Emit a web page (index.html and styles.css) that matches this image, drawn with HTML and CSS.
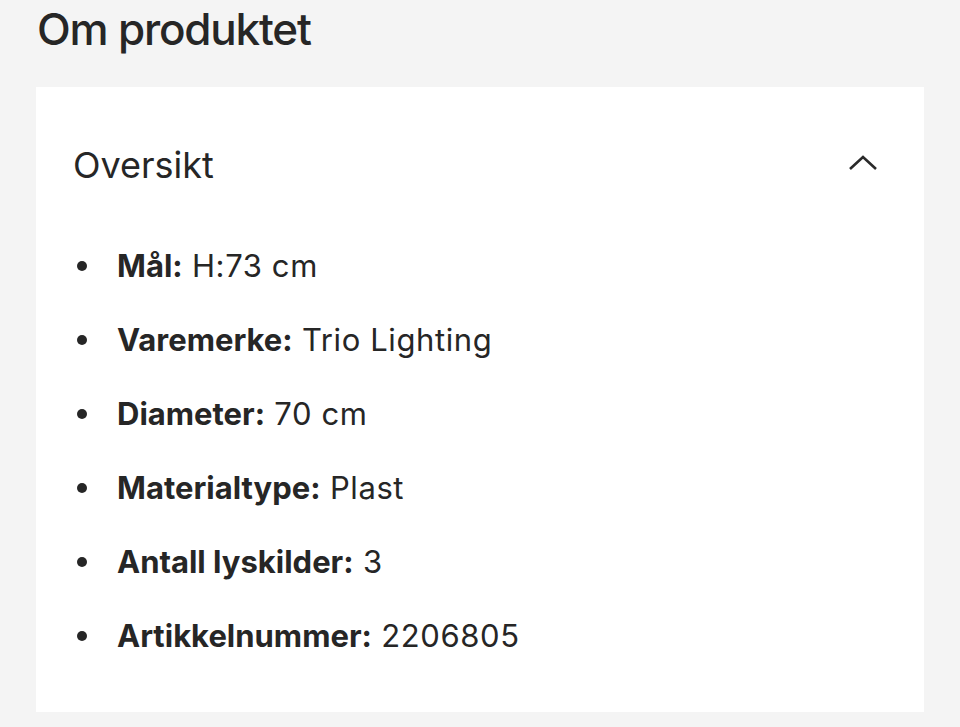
FILE: index.html
```html
<!DOCTYPE html>
<html lang="no">
<head>
<meta charset="utf-8">
<title>Om produktet</title>
<link rel="stylesheet" href="styles.css">
</head>
<body>
<h1 class="title">Om produktet</h1>
<section class="card">
  <div class="card-head">
    <h2 class="card-title">Oversikt</h2>
    <svg class="chevron" width="30" height="18" viewBox="0 0 30 18" aria-hidden="true">
      <path d="M2 15 L15 3 L28 15" fill="none" stroke="#2a2a2a" stroke-width="2.6" stroke-linecap="butt" stroke-linejoin="miter"/>
    </svg>
  </div>
  <ul class="specs">
    <li><b>Mål:</b> H:73 cm</li>
    <li><b>Varemerke:</b> Trio Lighting</li>
    <li><b>Diameter:</b> 70 cm</li>
    <li><b>Materialtype:</b> Plast</li>
    <li><b>Antall lyskilder:</b> 3</li>
    <li><b>Artikkelnummer:</b> 2206805</li>
  </ul>
</section>
</body>
</html>
```

FILE: styles.css
```css
html, body {
  margin: 0;
  padding: 0;
  background: #f4f4f4;
}
body {
  font-family: Inter, "Noto Sans", sans-serif;
  color: #262626;
  padding: 0 36px;
}
.title {
  margin: 0;
  font-size: 44px;
  line-height: 58px;
  font-weight: 500;
  letter-spacing: -1.2px;
  padding-left: 1px;
}
.card {
  background: #ffffff;
  margin-top: 29px;
  width: 888px;
  padding: 56px 46px 39px 37px;
  box-sizing: border-box;
}
.card-head {
  display: flex;
  align-items: center;
  justify-content: space-between;
  height: 44px;
}
.card-title {
  margin: 0;
  font-size: 36px;
  line-height: 44px;
  font-weight: 400;
  letter-spacing: 0;
}
.chevron {
  display: block;
  margin-top: -4px;
}
.specs {
  list-style: none;
  margin: 42px 0 0 0;
  padding: 0;
}
.specs li {
  display: flex;
  align-items: center;
  font-size: 31px;
  line-height: 74px;
  letter-spacing: 0.6px;
  white-space: pre;
}
.specs li::before {
  content: "";
  width: 10px;
  height: 10px;
  border-radius: 50%;
  background: #262626;
  margin-left: 4px;
  margin-right: 30px;
  flex: none;
}
.specs b {
  font-weight: 700;
  letter-spacing: 0;
}
```
